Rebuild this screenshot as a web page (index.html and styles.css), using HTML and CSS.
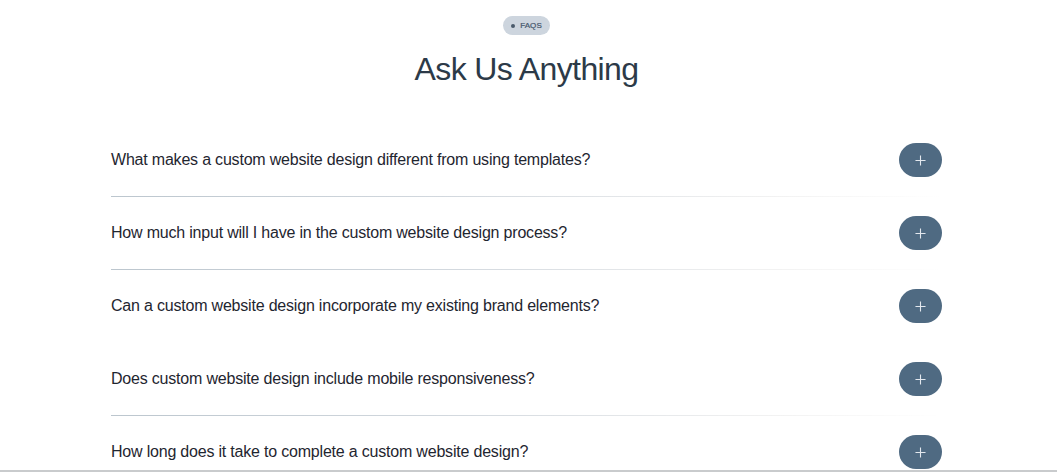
FILE: index.html
```html
<!DOCTYPE html>
<html lang="en">
<head>
<meta charset="utf-8">
<title>FAQs</title>
<link rel="stylesheet" href="styles.css">
</head>
<body>
<section class="faq">
  <header class="faq-head">
    <span class="badge"><span class="dot"></span>FAQS</span>
    <h2 class="title">Ask Us Anything</h2>
  </header>
  <ul class="faq-list">
    <li class="faq-item lined">
      <span class="question">What makes a custom website design different from using templates?</span>
      <button class="toggle" aria-label="Expand"><svg viewBox="0 0 12 12" width="11" height="11"><path d="M6 0.5v11M0.5 6h11" stroke="currentColor" stroke-width="1.2" fill="none"/></svg></button>
    </li>
    <li class="faq-item lined">
      <span class="question">How much input will I have in the custom website design process?</span>
      <button class="toggle" aria-label="Expand"><svg viewBox="0 0 12 12" width="11" height="11"><path d="M6 0.5v11M0.5 6h11" stroke="currentColor" stroke-width="1.2" fill="none"/></svg></button>
    </li>
    <li class="faq-item">
      <span class="question">Can a custom website design incorporate my existing brand elements?</span>
      <button class="toggle" aria-label="Expand"><svg viewBox="0 0 12 12" width="11" height="11"><path d="M6 0.5v11M0.5 6h11" stroke="currentColor" stroke-width="1.2" fill="none"/></svg></button>
    </li>
    <li class="faq-item lined">
      <span class="question">Does custom website design include mobile responsiveness?</span>
      <button class="toggle" aria-label="Expand"><svg viewBox="0 0 12 12" width="11" height="11"><path d="M6 0.5v11M0.5 6h11" stroke="currentColor" stroke-width="1.2" fill="none"/></svg></button>
    </li>
    <li class="faq-item">
      <span class="question">How long does it take to complete a custom website design?</span>
      <button class="toggle" aria-label="Expand"><svg viewBox="0 0 12 12" width="11" height="11"><path d="M6 0.5v11M0.5 6h11" stroke="currentColor" stroke-width="1.2" fill="none"/></svg></button>
    </li>
  </ul>
</section>
</body>
</html>
```
FILE: styles.css
```css
* { box-sizing: border-box; }

html, body { margin: 0; padding: 0; }

body {
  height: 100vh;
  overflow: hidden;
  background: #ffffff;
  border-bottom: 2px solid #c9cbcd;
  font-family: "Liberation Sans", Arial, sans-serif;
  color: #1f2630;
}

.faq {
  width: 831px;
  margin: 0 auto;
  padding-top: 16px;
  position: relative;
  left: -2px;
}

.faq-head {
  display: flex;
  flex-direction: column;
  align-items: center;
}

.badge {
  display: inline-flex;
  align-items: center;
  gap: 5px;
  height: 19px;
  padding: 0 8px 0 8px;
  border-radius: 10px;
  background: #cdd5de;
  color: #43546a;
  font-size: 8px;
  letter-spacing: 0.1px;
  -webkit-text-stroke: 0.2px #43546a;
}

.dot {
  width: 4px;
  height: 4px;
  border-radius: 50%;
  background: #4a5a6b;
}

.title {
  margin: 14px 0 0;
  font-size: 32px;
  font-weight: 400;
  line-height: 40px;
  color: #2c3a48;
  letter-spacing: -0.6px;
}

.faq-list {
  list-style: none;
  margin: 35px 0 0;
  padding: 0;
}

.faq-item {
  display: flex;
  align-items: center;
  justify-content: space-between;
  height: 73px;
  padding-bottom: 1px;
  position: relative;
}

.faq-item.lined::after {
  content: "";
  position: absolute;
  left: 0;
  right: 0;
  bottom: 0;
  height: 1px;
  background: linear-gradient(90deg, #bcc6ce 0%, #d2d8de 40%, #f2f2f2 80%, rgba(255,255,255,0) 100%);
}

.question {
  font-size: 16px;
  letter-spacing: -0.2px;
  color: #1f2630;
}

.toggle {
  width: 43px;
  height: 34px;
  border: 0;
  border-radius: 17px;
  background: #4f6a82;
  color: #e3e8ee;
  display: flex;
  align-items: center;
  justify-content: center;
  padding: 0;
}
```
